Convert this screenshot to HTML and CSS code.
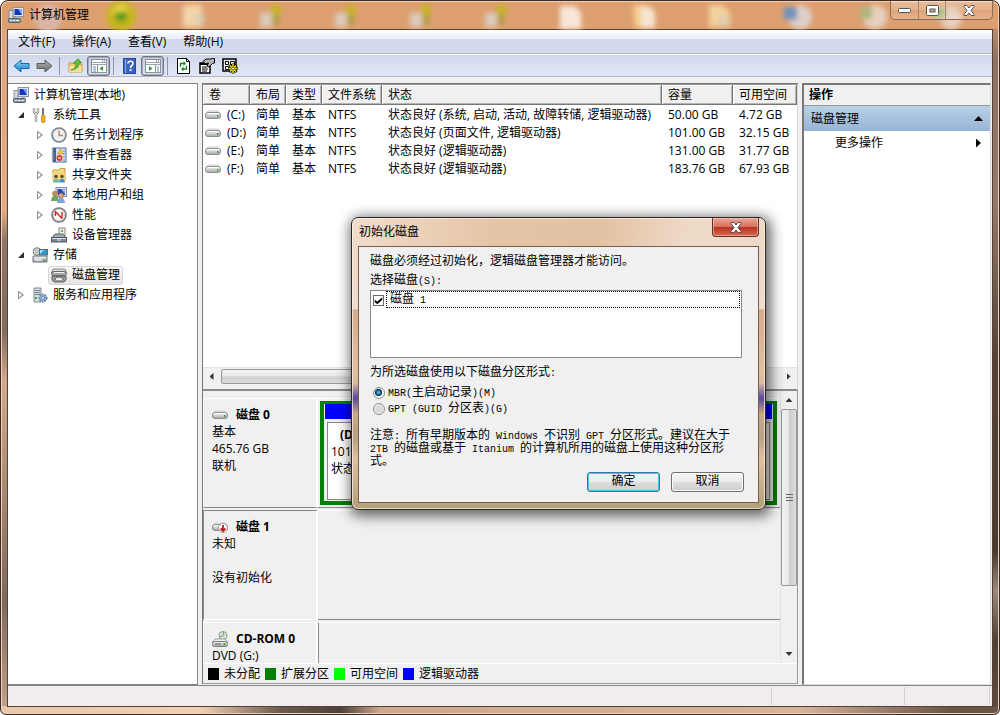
FILE: index.html
```html
<!DOCTYPE html>
<html lang="zh-CN">
<head>
<meta charset="utf-8">
<title>计算机管理</title>
<link rel="stylesheet" href="styles.css">
</head>
<body>
<svg class="defs" width="0" height="0" aria-hidden="true">
  <defs>
    <linearGradient id="metal" x1="0" y1="0" x2="0" y2="1"><stop offset="0" stop-color="#fafafa"/><stop offset="1" stop-color="#a4a6aa"/></linearGradient>
    <linearGradient id="blueArrow" x1="0" y1="0" x2="0" y2="1"><stop offset="0" stop-color="#8fdcfb"/><stop offset="1" stop-color="#1279c9"/></linearGradient>
    <linearGradient id="grayArrow" x1="0" y1="0" x2="0" y2="1"><stop offset="0" stop-color="#b5b5b5"/><stop offset="1" stop-color="#6a6a6a"/></linearGradient>
    <symbol id="drive" viewBox="0 0 16 16">
      <path d="M1 7 L3 4 H13 L15 7 Z" fill="#f4f4f4" stroke="#c0c0c0" stroke-width=".8"/>
      <rect x=".5" y="5.500" width="15" height="6" rx="2.500" fill="url(#metal)" stroke="#8b8d91"/>
      <path d="M2.500 6.500h11" stroke="#fff"/>
      <rect x="12" y="8" width="1.500" height="2" fill="#3f9a35"/>
    </symbol>
    <symbol id="computer" viewBox="0 0 16 16">
      <rect x="5" y=".5" width="10.500" height="9" fill="#dfe5ee" stroke="#8793a8"/>
      <rect x="6.500" y="2" width="7.500" height="6" fill="#1637b8"/>
      <path d="M10 2h4v6z" fill="#7da5f2"/>
      <rect x="1" y="3.500" width="4" height="8" fill="#d4d9df" stroke="#7d8691" stroke-width=".8"/>
      <path d="M8 9.500h4v2H8z" fill="#aab3c2"/>
      <rect x=".5" y="11.500" width="12" height="4" rx="1" fill="#8d99a4" stroke="#56616c"/>
      <path d="M2 13.500h2m1 0h2m1 0h3" stroke="#e7edf2"/>
    </symbol>
    <symbol id="panel" viewBox="0 0 16 14">
      <rect x=".5" y=".5" width="15" height="13" fill="#fff" stroke="#8b929c"/>
      <path d="M1 3.500h14M1 5.500h14" stroke="#9aa3ae"/>
      <path d="M11 2h1m1 0h1" stroke="#555"/>
    </symbol>
  </defs>
</svg>

<div class="window">
  <header class="titlebar">
    <svg class="glass" width="1000" height="29" aria-hidden="true">
      <g filter="url(#soft)">
        <circle cx="48" cy="17" r="14" fill="#d9b5a5"/>
        <circle cx="121" cy="15" r="15" fill="#c7b51c"/><circle cx="121" cy="15" r="6" fill="#5d9a22"/><path d="M108 12l14-9 8 7z" fill="#e8d747"/>
        <rect x="183" y="4" width="19" height="22" fill="#f2d4a8"/><circle cx="200" cy="18" r="5" fill="#d8cdb2"/>
        <g id="app"><rect x="260" y="12" width="12" height="14" fill="#dccaba"/><circle cx="276" cy="9" r="6" fill="#c8b22c"/><path d="M272 14h7v10h-5z" fill="#ad9c3a"/></g>
        <use href="#app" x="75"/><use href="#app" x="150"/><use href="#app" x="225"/>
        <path d="M560 5h15l6 7v16h-21z" fill="#f9e6d8"/>
        <path d="M633 4h14v22h-12z" fill="#f7cd8e"/><path d="M641 6h10l4 6v15h-14z" fill="#f6e4d0"/>
        <path d="M709 4h14l7 8v14h-21z" fill="#f3d19c"/><circle cx="724" cy="20" r="6" fill="#ddceb0"/>
        <circle cx="800" cy="16" r="12" fill="#dfcfca"/><rect x="784" y="6" width="13" height="13" fill="#7391bd"/>
        <circle cx="875" cy="16" r="12" fill="#e6cfbd"/><rect x="860" y="6" width="12" height="12" fill="#afb57c"/>
        <circle cx="951" cy="17" r="11" fill="#e8cfbd"/><rect x="934" y="6" width="12" height="12" fill="#a9bb7c"/>
      </g>
      <filter id="soft"><feGaussianBlur stdDeviation="2.500"/></filter>
    </svg>
    <svg class="icon" viewBox="0 0 16 16"><use href="#computer"/></svg>
    <h1 class="title">计算机管理</h1>
    <div class="caption">
      <button class="cap" aria-label="最小化"><svg width="13" height="7" viewBox="0 0 13 7"><rect x=".5" y="1.500" width="12" height="4" rx="1" fill="#fff" stroke="#55565c"/></svg></button>
      <button class="cap" aria-label="最大化"><svg width="13" height="11" viewBox="0 0 13 11"><rect x=".5" y=".5" width="12" height="10" rx="1" fill="#fff" stroke="#55565c"/><rect x="4" y="4" width="5" height="3" fill="#d9a57e" stroke="#55565c"/></svg></button>
      <button class="cap cap-close" aria-label="关闭"><svg width="12" height="11" viewBox="0 0 12 11"><path d="M1 .5h3l2 2.500 2-2.500h3v1L8 5.500l3 4v1H8L6 8l-2 2.500H1v-1l3-4-3-4z" fill="#fff" stroke="#55565c"/></svg></button>
    </div>
  </header>

  <div class="client">
    <nav class="menubar">
      <button class="menu">文件(F)</button>
      <button class="menu">操作(A)</button>
      <button class="menu">查看(V)</button>
      <button class="menu">帮助(H)</button>
    </nav>
    <div class="toolbar">
      <button class="tool" aria-label="后退"><svg width="17" height="14" viewBox="0 0 17 14"><path d="M1 7l7-6v3.500h8v5H8V13z" fill="url(#blueArrow)" stroke="#1b66a8"/></svg></button>
      <button class="tool" aria-label="前进"><svg width="17" height="14" viewBox="0 0 17 14"><path d="M16 7L9 1v3.500H1v5h8V13z" fill="url(#grayArrow)" stroke="#5d5d5d"/></svg></button>
      <i class="sep"></i>
      <button class="tool" aria-label="上一级"><svg width="15" height="15" viewBox="0 0 15 15"><path d="M1 5h5l1 1h7v8H1z" fill="#f0cf70" stroke="#c39a3c"/><path d="M1.500 8h12v6h-12z" fill="#f9e09a"/><path d="M3 12C7 11 8 8 8 5H5.500L10 .8 13.500 5H11c0 4-3 7-8 7z" fill="#63c436" stroke="#2f8a1c" stroke-width=".7"/></svg></button>
      <button class="tool pressed" aria-label="显示控制台树"><svg width="16" height="14" viewBox="0 0 16 14"><use href="#panel"/><path d="M6.500 6v7" stroke="#8b929c"/><path d="M2 8h3m-3 2h3m-3 2h3" stroke="#5e8fc0"/><path d="M12 7v5L8.500 9.500z" fill="#2ea12b"/></svg></button>
      <i class="sep"></i>
      <button class="tool" aria-label="帮助"><svg width="13" height="16" viewBox="0 0 13 16"><rect x=".5" y=".5" width="12" height="15" fill="#3c62c4" stroke="#28479a"/><path d="M2.500 1v14" stroke="#8ea8e8"/><path d="M5 5.500C5 2.500 10 2.500 10 5.500 10 7.500 7.500 7.500 7.500 10" fill="none" stroke="#fff" stroke-width="1.600"/><rect x="6.700" y="11.200" width="1.800" height="1.800" fill="#fff"/></svg></button>
      <button class="tool pressed" aria-label="显示操作窗格"><svg width="16" height="14" viewBox="0 0 16 14"><use href="#panel"/><path d="M10.500 6v7" stroke="#8b929c"/><path d="M12 8h2m-2 2h2m-2 2h2" stroke="#5e8fc0"/><path d="M4 7v5l3.500-2.500z" fill="#2ea12b"/></svg></button>
      <i class="sep"></i>
      <button class="tool" aria-label="刷新"><svg width="13" height="16" viewBox="0 0 13 16"><path d="M.5.5h9l3 3v12H.5z" fill="#fff" stroke="#000"/><path d="M9.500.5v3h3" fill="none" stroke="#000"/><path d="M3.500 9V5.500H7M9.500 7.500V11H6" fill="none" stroke="#168a22" stroke-width="1.300"/><path d="M6.500 3v5l2.500-2.500zM6.500 8.500v5L4 11z" fill="#168a22"/></svg></button>
      <button class="tool" aria-label="属性"><svg width="16" height="16" viewBox="0 0 16 16"><rect x="1" y="5" width="10" height="10" fill="#fff" stroke="#000" stroke-width="1.500"/><path d="M1 6h10" stroke="#000" stroke-width="2"/><path d="M3 9h5m-5 2h6m-6 2h5" stroke="#000"/><path d="M4 3.500l3-2.500h5l1.500-.5h2V5l-2 .5L10 9 8 8l1.500-3-3 1z" fill="#b5b5b5" stroke="#000"/></svg></button>
      <button class="tool" aria-label="设置"><svg width="16" height="16" viewBox="0 0 16 16"><rect x="1" y="1" width="13" height="12" fill="#e8e8e8" stroke="#000" stroke-width="1.500"/><path d="M3.500 3.500h3v3h-3zM3.500 8.500h3v3h-3z" fill="#fff" stroke="#000"/><path d="M8.500 3.500h4v3h-4z" fill="#fff" stroke="#000"/><path d="M11 5.500v10M6 10.500h10M7.500 7l7 7m0-7l-7 7" stroke="#000" stroke-width="2.600"/><path d="M11 6v9M6.500 10.500h9M8 7.500l6 6m0-6l-6 6" stroke="#f5e11c" stroke-width="1.500"/><circle cx="11" cy="10.500" r="1.400" fill="#fff" stroke="#000" stroke-width=".6"/></svg></button>
    </div>

    <main class="panes">
      <nav class="tree" aria-label="控制台树">
        <div class="node l0"><span class="label"><svg class="icon" viewBox="0 0 16 16"><use href="#computer"/></svg>计算机管理(本地)</span></div>
        <div class="node l1"><i class="arrow open"></i><span class="label"><svg class="icon" viewBox="0 0 16 16"><path d="M2 1v4l2 2 2-2V1M4 6.500V15" fill="none" stroke="#8c8c8c" stroke-width="2.400"/><path d="M2 1v4l2 2 2-2V1M4 6.500V15" fill="none" stroke="#e4e4e4"/><path d="M11 1v7" stroke="#777" stroke-width="2"/><rect x="9.500" y="8" width="3.500" height="7.500" rx="1.500" fill="#f3b41d" stroke="#b77d0b" stroke-width=".8"/></svg>系统工具</span></div>
        <div class="node l2"><i class="arrow"></i><span class="label"><svg class="icon" viewBox="0 0 16 16"><circle cx="8" cy="8" r="7" fill="#f7efd8" stroke="#77818e" stroke-width="1.600"/><circle cx="8" cy="8" r="5.500" fill="#eef3fa" stroke="#cfd6df" stroke-width=".6"/><path d="M8 3.500v5h4" fill="none" stroke="#c08a3c" stroke-width="1.400"/></svg>任务计划程序</span></div>
        <div class="node l2"><i class="arrow"></i><span class="label"><svg class="icon" viewBox="0 0 16 16"><rect x="2" y="1" width="13" height="14" fill="#d9e6f5" stroke="#4c6ba0"/><rect x="2" y="1" width="3" height="14" fill="#3f5f99"/><path d="M.5 3h3m-3 3h3m-3 3h3m-3 3h3" stroke="#999"/><path d="M12 4h2m-2 3h2m-2 3h2m-2 3h2" stroke="#6787bb"/><path d="M9.500 2l3 5h-6z" fill="#ffd52a" stroke="#b78500" stroke-width=".6"/><circle cx="8.500" cy="11" r="3" fill="#dc3a2c"/><path d="M7.500 10l2 2m0-2l-2 2" stroke="#fff"/></svg>事件查看器</span></div>
        <div class="node l2"><i class="arrow"></i><span class="label"><svg class="icon" viewBox="0 0 16 16"><path d="M2 3h6l1-1.500h5V13H2z" fill="#f6dc84" stroke="#c49d3d"/><path d="M2 5.500h12v7.500H2z" fill="#f3d27a"/><circle cx="5" cy="9.500" r="1.700" fill="#584327"/><path d="M2 15.500c0-5 6-5 6 0z" fill="#6cb6a2"/><circle cx="11" cy="9.500" r="1.700" fill="#6d4b28"/><path d="M8 15.500c0-5 6-5 6 0z" fill="#4690cf"/></svg>共享文件夹</span></div>
        <div class="node l2"><i class="arrow"></i><span class="label"><svg class="icon" viewBox="0 0 16 16"><rect x="5" y=".5" width="10.500" height="9" fill="#dbe3ee" stroke="#8390a5"/><rect x="6.500" y="2" width="7.500" height="6" fill="#2148bd"/><path d="M10 2h4v5z" fill="#8fb0f0"/><circle cx="4" cy="6.500" r="2.800" fill="#b98a5c"/><path d="M0 14c0-7 8-7 8 0z" fill="#6fa45c"/><circle cx="10" cy="8.500" r="2.500" fill="#d9a978" stroke="#82583a" stroke-width=".7"/><path d="M6 16c0-7 8-7 8 0z" fill="#7fa6da"/></svg>本地用户和组</span></div>
        <div class="node l2"><i class="arrow"></i><span class="label"><svg class="icon" viewBox="0 0 16 16"><circle cx="8" cy="8" r="7" fill="#fff" stroke="#777" stroke-width="1.600"/><circle cx="8" cy="8" r="5.500" fill="none" stroke="#c9c9c9"/><path d="M4.500 4v5M4.500 4.500l6.500 7M11 5v6.500" fill="none" stroke="#d12424" stroke-width="1.400"/></svg>性能</span></div>
        <div class="node l2"><i class="arrow none"></i><span class="label"><svg class="icon" viewBox="0 0 16 16"><rect x="8" y="1" width="6" height="8" fill="#f2f2ec" stroke="#8a8a80"/><path d="M10 3h2v2h-2z" fill="#6d9a52"/><path d="M2 9l2-2h8l2 2v2H2z" fill="#a4adb6" stroke="#5e6973"/><rect x=".5" y="10.500" width="15" height="4.500" fill="#7b8791" stroke="#4e5962"/><path d="M1 11.500h14" stroke="#dde3e8"/><path d="M6 13h4" stroke="#eee"/></svg>设备管理器</span></div>
        <div class="node l1"><i class="arrow open"></i><span class="label"><svg class="icon" viewBox="0 0 16 16"><circle cx="5" cy="4.500" r="3.800" fill="#cdd8d0" stroke="#71807a"/><circle cx="5" cy="4.500" r="1.200" fill="#fff" stroke="#777" stroke-width=".6"/><rect x="7.500" y="2.500" width="8" height="5.500" fill="#2d9bd0" stroke="#5a6a75"/><path d="M8 3h4l-4 4z" fill="#a8e2f5"/><path d="M1 9h14v6H1z" fill="url(#metal)" stroke="#6b6f74"/><path d="M3 13h6" stroke="#fff"/><rect x="11.500" y="12" width="2" height="2" fill="#3c9e35"/></svg>存储</span></div>
        <div class="node l2"><i class="arrow none"></i><span class="label selected"><svg class="icon" viewBox="0 0 16 16"><path d="M2 2h12l1.500 4H.5z" fill="#d8d8d8" stroke="#888"/><rect x=".5" y="4.500" width="15" height="4" rx="2" fill="#a6a6a6" stroke="#666"/><path d="M3 5.500h10" stroke="#f2f2f2"/><path d="M1 9h14v4l-2 2H3L1 13z" fill="#9a9a9a" stroke="#606060"/><path d="M4 13c0-4 8-4 8 0" fill="#eee" stroke="#555"/></svg>磁盘管理</span></div>
        <div class="node l1"><i class="arrow"></i><span class="label"><svg class="icon" viewBox="0 0 16 16"><path d="M2 1h7v14H2z" fill="#d5dce2" stroke="#7a8894"/><path d="M3 3.500h5M3 5.500h5M3 7.500h5" stroke="#72818d"/><rect x="3" y="10" width="2" height="2" fill="#46a34b"/><circle cx="11" cy="11" r="3.600" fill="#9fb9d3" stroke="#5b81a8" stroke-width="1.800" stroke-dasharray="1.600 1"/><circle cx="11" cy="11" r="1.500" fill="#fff" stroke="#5b81a8"/></svg>服务和应用程序</span></div>
      </nav>

      <section class="center">
        <div class="volumes">
          <table class="vol-table">
            <colgroup><col class="c-vol"><col class="c-layout"><col class="c-type"><col class="c-fs"><col><col class="c-cap"><col class="c-free"></colgroup>
            <thead><tr><th>卷</th><th>布局</th><th>类型</th><th>文件系统</th><th>状态</th><th>容量</th><th>可用空间</th></tr></thead>
            <tbody>
              <tr><td class="vol"><svg class="icon" viewBox="0 0 16 16"><use href="#drive"/></svg>(C:)</td><td>简单</td><td>基本</td><td>NTFS</td><td>状态良好 (系统, 启动, 活动, 故障转储, 逻辑驱动器)</td><td>50.00 GB</td><td>4.72 GB</td></tr>
              <tr><td class="vol"><svg class="icon" viewBox="0 0 16 16"><use href="#drive"/></svg>(D:)</td><td>简单</td><td>基本</td><td>NTFS</td><td>状态良好 (页面文件, 逻辑驱动器)</td><td>101.00 GB</td><td>32.15 GB</td></tr>
              <tr><td class="vol"><svg class="icon" viewBox="0 0 16 16"><use href="#drive"/></svg>(E:)</td><td>简单</td><td>基本</td><td>NTFS</td><td>状态良好 (逻辑驱动器)</td><td>131.00 GB</td><td>31.77 GB</td></tr>
              <tr><td class="vol"><svg class="icon" viewBox="0 0 16 16"><use href="#drive"/></svg>(F:)</td><td>简单</td><td>基本</td><td>NTFS</td><td>状态良好 (逻辑驱动器)</td><td>183.76 GB</td><td>67.93 GB</td></tr>
            </tbody>
          </table>
          <div class="hscroll">
            <button class="sbtn" aria-label="向左滚动"><i class="tri left"></i></button>
            <div class="hthumb"></div>
            <button class="sbtn" aria-label="向右滚动"><i class="tri right"></i></button>
          </div>
        </div>

        <div class="disks">
          <div class="disk-area">
            <div class="disk-list">
              <div class="disk">
                <div class="disk-label raised">
                  <div class="disk-name"><svg class="icon" viewBox="0 0 16 16"><use href="#drive"/></svg>磁盘 0</div>
                  <div>基本</div><div>465.76 GB</div><div>联机</div>
                </div>
                <div class="disk-body">
                  <div class="extended">
                    <div class="stripe"></div>
                    <div class="volume"><b>(D:)</b><span>101.00 GB NTFS</span><span>状态良好</span></div>
                  </div>
                </div>
              </div>
              <div class="disk">
                <div class="disk-label sunken">
                  <div class="disk-name"><svg class="icon" viewBox="0 0 16 16"><use href="#drive"/><circle cx="11" cy="9" r="4.500" fill="#fff" stroke="#999"/><path d="M11 6v6M8.500 9.500L11 12l2.500-2.500" fill="none" stroke="#c4151c" stroke-width="1.800"/></svg>磁盘 1</div>
                  <div>未知</div><div>&nbsp;</div><div>没有初始化</div>
                </div>
                <div class="disk-body"></div>
              </div>
              <div class="disk last">
                <div class="disk-label raised">
                  <div class="disk-name"><svg class="icon" viewBox="0 0 16 16"><circle cx="11" cy="4.500" r="4" fill="#dbe8dc" stroke="#8d9a90"/><path d="M11 .5l1 3.500M7.500 6l3-1.500" stroke="#67a868"/><circle cx="11" cy="4.500" r="1" fill="#fff" stroke="#777" stroke-width=".6"/><path d="M3 8h10l2.500 3H.5z" fill="#f1f1f1" stroke="#a1a1a1"/><rect x=".5" y="10.500" width="15" height="5" rx="2" fill="url(#metal)" stroke="#77797d"/><path d="M3 13h6" stroke="#555"/><rect x="11.500" y="12" width="2" height="2" fill="#3c9e35"/></svg>CD-ROM 0</div>
                  <div>DVD (G:)</div>
                </div>
                <div class="disk-body line-left"></div>
              </div>
            </div>
            <div class="vscroll">
              <button class="sbtn" aria-label="向上滚动"><i class="tri up"></i></button>
              <div class="vthumb"><i class="grip"></i></div>
              <button class="sbtn" aria-label="向下滚动"><i class="tri down"></i></button>
            </div>
          </div>
          <div class="legend">
            <span class="key"><i class="swatch unalloc"></i>未分配</span>
            <span class="key"><i class="swatch ext"></i>扩展分区</span>
            <span class="key"><i class="swatch free"></i>可用空间</span>
            <span class="key"><i class="swatch logical"></i>逻辑驱动器</span>
          </div>
        </div>
      </section>

      <aside class="actions">
        <h2 class="actions-head">操作</h2>
        <button class="action-group">磁盘管理<i class="tri up big"></i></button>
        <button class="action-item">更多操作<i class="tri right big"></i></button>
      </aside>
    </main>

    <footer class="statusbar"><span class="cell grow"></span><span class="cell mid"></span><span class="cell end"></span></footer>
  </div>

  <div class="dialog" role="dialog" aria-labelledby="dlg-title">
    <div class="dialog-title">
      <h2 id="dlg-title">初始化磁盘</h2>
      <button class="dialog-close" aria-label="关闭"><svg width="12" height="11" viewBox="0 0 12 11"><path d="M1 .5h3l2 2.500 2-2.500h3v1L8 5.500l3 4v1H8L6 8l-2 2.500H1v-1l3-4-3-4z" fill="#fff" stroke="#5b4a5c"/></svg></button>
    </div>
    <form class="dialog-body">
      <p>磁盘必须经过初始化，逻辑磁盘管理器才能访问。</p>
      <p>选择磁盘<span class="en">(S):</span></p>
      <div class="listbox">
        <input class="check" type="checkbox" id="d1" checked>
        <label class="list-item" for="d1">磁盘<span class="en"> 1</span></label>
      </div>
      <p class="style-head">为所选磁盘使用以下磁盘分区形式<span class="en">:</span></p>
      <div class="option"><input class="radio" type="radio" name="style" id="mbr" checked><label for="mbr"><span class="en">MBR(</span>主启动记录<span class="en">)(M)</span></label></div>
      <div class="option"><input class="radio" type="radio" name="style" id="gpt"><label for="gpt"><span class="en">GPT (GUID </span>分区表<span class="en">)(G)</span></label></div>
      <p class="note">注意<span class="en">: </span>所有早期版本的<span class="en"> Windows </span>不识别<span class="en"> GPT </span>分区形式。建议在大于<br><span class="en">2TB </span>的磁盘或基于<span class="en"> Itanium </span>的计算机所用的磁盘上使用这种分区形<br>式。</p>
      <div class="buttons">
        <button type="button" class="btn default">确定</button>
        <button type="button" class="btn">取消</button>
      </div>
    </form>
  </div>
</div>
</body>
</html>
```
FILE: styles.css
```css
* { box-sizing: border-box; }

body {
  margin: 0;
  background: #fff;
  color: #000;
  font: 12px/18px "Open Sans", "Noto Sans CJK SC", sans-serif;
}

button, input { font: inherit; color: inherit; margin: 0; }
button { border: 0; padding: 0; background: none; }
h1, h2, p { margin: 0; font: inherit; }
.defs { position: absolute; }
.icon { width: 16px; height: 16px; flex: none; }
svg { display: block; }

/* window frame */
.window {
  position: relative;
  display: flex;
  flex-direction: column;
  height: 100vh;
  padding: 0 6px 7px;
  border: 1px solid #3e2a20;
  border-radius: 8px 8px 6px 6px;
  overflow: hidden;
  box-shadow: inset 0 0 0 1px #f0d2bc;
  background:
    linear-gradient(#dd9f70, #dd9f70) 0 0 / 100% 28px no-repeat,
    linear-gradient(90deg, #e8c8ac 0, #f0d0b4 20%, #6a5c50 28%, #4c423a 34%, #cba88e 38%, #d6b49c 80%, #6a5648 95%) 0 100% / 100% 8px no-repeat,
    linear-gradient(#dfa57b 0, #e2ab83 210px, #8d7766 240px, #7f6c5e 330px, #d3aa8c 380px, #7c6a5c 600px, #c5a58e) 0 0 / 8px 100% no-repeat,
    linear-gradient(#dfa57b 0, #8a7262 60px, #937b6b 200px, #54453b 350px, #463a33 550px, #988a80 590px, #4d4038 640px, #5c4c42) 100% 0 / 8px 100% no-repeat;
}

.titlebar {
  position: relative;
  display: flex;
  align-items: center;
  flex: 0 0 28px;
  gap: 5px;
  padding-left: 1px;
}
.glass { position: absolute; left: -7px; top: 0; z-index: 0; }
.titlebar > .icon, .title, .caption { position: relative; }
.title { flex: 1; }
.caption {
  display: flex;
  align-self: flex-start;
  height: 19px;
  border: 1px solid #8b6a58;
  border-top: 0;
  border-radius: 0 0 5px 5px;
  overflow: hidden;
}
.cap {
  display: grid;
  place-items: center;
  width: 27px;
  background: linear-gradient(rgba(255, 255, 255, .3), rgba(255, 255, 255, .18) 50%, rgba(255, 255, 255, .05) 50%, rgba(255, 255, 255, .2));
}
.cap + .cap { border-left: 1px solid #a98470; }
.cap-close { width: 47px; }

.client {
  display: flex;
  flex-direction: column;
  flex: 1;
  min-height: 0;
  border: 1px solid #5a4032;
  background: #f0f0f0;
}

/* menu and toolbar */
.menubar {
  display: flex;
  flex: 0 0 24px;
  align-items: center;
  gap: 17px;
  padding-left: 10px;
  border-bottom: 1px solid #b2b6c6;
  background: linear-gradient(#fff, #e6ebf6 9px, #d3daed 9px, #d3daed);
}
.toolbar {
  display: flex;
  flex: 0 0 23px;
  align-items: center;
  gap: 6px;
  padding-left: 5px;
  border-top: 1px solid #fff;
  border-bottom: 1px solid #b2b6c6;
  background: linear-gradient(#cfd8ea, #e0e7f7);
}
.tool { display: grid; place-items: center; min-width: 17px; height: 20px; }
.tool.pressed {
  width: 23px;
  margin: 0 -3px;
  border: 1px solid #6c7587;
  border-radius: 3px;
  background: linear-gradient(#c6ccd9, #dfe4ee);
  box-shadow: inset 0 0 0 1px #a4acbd;
}
.sep { width: 1px; height: 18px; margin-right: 1px; background: #8d95a5; }

/* three panes */
.panes {
  display: grid;
  flex: 1;
  grid-template-columns: 190px minmax(0, 1fr) 189px;
  grid-template-rows: minmax(0, 1fr);
  gap: 4px;
  min-height: 0;
  padding: 6px 1px 0 0;
}

.tree {
  padding-top: 1px;
  border: 1px solid #858585;
  border-left: 0;
  background: #fff;
}
.node { display: flex; align-items: center; gap: 2px; height: 20px; }
.node.l0 { padding-left: 2px; }
.node.l1 { padding-left: 7px; }
.node.l2 { padding-left: 26px; }
.label {
  display: flex;
  align-items: center;
  gap: 5px;
  height: 19px;
  padding: 0 2px;
  border: 1px solid transparent;
}
.label.selected {
  border-color: #d6d6d6;
  border-radius: 3px;
  background: linear-gradient(#f9f9f9, #e5e5e5);
}
.arrow { display: grid; place-items: center; width: 12px; height: 12px; }
.arrow::before {
  content: "";
  width: 6px;
  height: 9px;
  background: #8e8e8e;
  clip-path: polygon(0 0, 100% 50%, 0 100%, 0 0, 1px 2px, 1px 7px, 4px 50%, 1px 2px);
}
.arrow.open::before {
  width: 6px;
  height: 6px;
  background: #303030;
  clip-path: polygon(100% 0, 100% 100%, 0 100%);
}
.arrow.none::before { content: none; }

.center {
  display: grid;
  grid-template-rows: 307px minmax(0, 1fr);
  margin-bottom: 1px;
  border-top: 1px solid #777;
  border-left: 1px solid #777;
}

/* volume list */
.volumes {
  display: flex;
  flex-direction: column;
  justify-content: space-between;
  border-top: 1px solid #999;
  border-right: 1px solid #d8d8d8;
  border-bottom: 2px solid #8b8b8b;
  background: #fff;
  min-height: 0;
}
.vol-table {
  width: 100%;
  table-layout: fixed;
  border-collapse: separate;
  border-spacing: 0;
}
.c-vol { width: 47px; }
.c-layout, .c-type { width: 36px; }
.c-fs { width: 60px; }
.c-cap { width: 71px; }
.c-free { width: 64px; }
.vol-table th {
  height: 20px;
  padding: 1px 6px 0;
  border-right: 1px solid #777;
  border-bottom: 1px solid #777;
  background: #f0f0f0;
  box-shadow: inset 1px 1px 0 #fff, inset -1px -1px 0 #b5b5b5;
  font-weight: 400;
  text-align: left;
  white-space: nowrap;
}
.vol-table td { height: 18px; padding: 0 0 0 6px; white-space: nowrap; }
.vol-table td.vol { display: flex; align-items: center; gap: 6px; padding-left: 2px; }
.vol-table tbody::before { content: ""; display: block; height: 1px; }

.hscroll {
  display: flex;
  height: 22px;
  padding-bottom: 4px;
  border-top: 1px solid #e3e3e3;
  background: #f0f0f0;
}
.sbtn { display: grid; place-items: center; flex: 0 0 17px; }
.hthumb {
  flex: 0 0 430px;
  margin: 1px 0 1px 1px;
  border: 1px solid #989898;
  border-radius: 2px;
  background: linear-gradient(#f5f5f5, #e6e6e6 48%, #d0d0d0 52%, #dcdcdc);
}
.hscroll .sbtn:last-child { margin-left: auto; }

.tri { width: 7px; height: 4px; background: #333; }
.tri.up { clip-path: polygon(50% 0, 100% 100%, 0 100%); }
.tri.down { clip-path: polygon(0 0, 100% 0, 50% 100%); }
.tri.left { width: 4px; height: 7px; clip-path: polygon(100% 0, 100% 100%, 0 50%); }
.tri.right { width: 4px; height: 7px; clip-path: polygon(0 0, 100% 50%, 0 100%); }
.tri.big { width: 9px; height: 5px; background: #000; }
.tri.right.big { width: 5px; height: 9px; margin-right: 2px; }

/* disk map */
.disks {
  display: flex;
  flex-direction: column;
  min-height: 0;
  border-right: 1px solid #999;
  border-bottom: 1px solid #999;
}
.disk-area { display: flex; flex: 1; min-height: 0; }
.disk-list {
  display: flex;
  flex: 1;
  flex-direction: column;
  gap: 2px;
  padding-top: 7px;
  min-width: 0;
  overflow: hidden;
}
.disk { display: flex; flex: 0 0 110px; min-height: 0; }
.disk.last { flex: 1 1 0; overflow: hidden; }
.disk-label {
  flex: 0 0 115px;
  padding: 7px 0 0 8px;
  border: 1px solid #fff;
  line-height: 17px;
}
.disk-label.raised { border-right: 2px solid #fff; border-bottom: 1px solid #888; }
.disk-label.sunken { border-color: #888 #fff #fff #888; border-right-width: 2px; }
.disk.last .disk-label { border-bottom: 0; }
.disk-name { display: flex; align-items: center; gap: 8px; font-weight: 700; }
.disk-body {
  flex: 1;
  min-width: 0;
  padding: 2px 3px 2px 2px;
  border-top: 1px solid #fff;
  border-bottom: 1px solid #888;
}
.disk-body.line-left { border-left: 1px solid #888; border-bottom: 0; }
.extended {
  display: flex;
  flex-direction: column;
  gap: 3px;
  height: 100%;
  padding: 0 1px 1px;
  border: 4px solid #008000;
  border-top-width: 3px;
  background: #f0f0f0;
}
.stripe { flex: 0 0 15px; background: #00f; }
.volume {
  display: flex;
  flex: 1;
  flex-direction: column;
  min-height: 0;
  margin: 0 2px;
  padding: 3px 3px;
  border: 1px solid #888;
  background: #fff;
  line-height: 17px;
}
.volume b { padding-left: 9px; }

.vscroll { display: flex; flex: 0 0 17px; flex-direction: column; border-left: 1px solid #e3e3e3; }
.vscroll .sbtn { flex-basis: 18px; }
.vthumb {
  display: grid;
  place-items: center;
  flex: 0 0 177px;
  border: 1px solid #989898;
  border-radius: 2px;
  background: linear-gradient(90deg, #f5f5f5, #e6e6e6 48%, #cdcdd2 52%, #dcdcdc);
}
.vscroll .sbtn:last-child { margin-top: auto; }
.grip { width: 7px; height: 8px; background: repeating-linear-gradient(#666 0, #666 1px, transparent 1px, transparent 3px); }

.legend {
  display: flex;
  align-items: center;
  flex: 0 0 20px;
  gap: 5px;
  padding-left: 5px;
  border-top: 1px solid #fff;
}
.key { display: flex; align-items: center; gap: 5px; }
.swatch { width: 11px; height: 12px; }
.unalloc { background: #000; }
.ext { background: #008000; }
.free { background: #0f0; }
.logical { background: #00f; }

/* actions */
.actions {
  display: flex;
  flex-direction: column;
  border: 1px solid #dcdcdc;
  border-top: 2px solid #777;
  border-left: 2px solid #777;
  background: #fff;
}
.actions-head {
  height: 21px;
  padding: 1px 0 0 5px;
  border-bottom: 1px solid #999;
  background: #f0f0f0;
  font-weight: 700;
}
.action-group, .action-item {
  display: flex;
  align-items: center;
  justify-content: space-between;
  height: 25px;
  padding: 0 7px;
}
.action-group { background: linear-gradient(#b9d1e8, #98b4d4); }
.action-item { height: 24px; padding-left: 31px; }

.statusbar {
  display: flex;
  flex: 0 0 21px;
  padding: 1px 2px 1px 0;
  border-top: 1px solid #858585;
  background: #f0edec;
}
.cell { border-right: 1px solid #d2cfce; }
.grow { flex: 1; }
.mid { width: 133px; }
.end { width: 85px; }

/* dialog window */
.dialog {
  position: absolute;
  left: 350px;
  top: 216px;
  width: 415px;
  padding: 0 6px 6px;
  border: 1px solid #2d2420;
  border-radius: 7px;
  background:
    linear-gradient(100deg, #f1dccb 0, #e5c4a6 35%, #e3c2a3 60%, #eed8c6 80%) 0 0 / 100% 30px no-repeat,
    linear-gradient(#ecd5c3, #f0dccd 91px, #d4ac8c 92px, #e0bf9f 150px, #d9bb9c 165px, #5a48a0 180px, #c8a98c 196px, #b7a184 220px, #dfc0a0 240px, #b2a27c 290px);
  box-shadow: inset 0 0 0 1px rgba(255, 245, 235, .7), 2px 3px 13px 3px rgba(0, 0, 0, .6);
}
.dialog-title { display: flex; height: 28px; }
.dialog-title h2 { flex: 1; padding: 5px 0 0 1px; }
.dialog-close {
  display: grid;
  place-items: center;
  width: 47px;
  height: 19px;
  border: 1px solid #65302a;
  border-top: 0;
  border-radius: 0 0 4px 4px;
  background: linear-gradient(#e8a597, #d8705c 48%, #b93420 52%, #d9674d);
  box-shadow: inset 0 0 0 1px rgba(255, 220, 205, .5);
}
.dialog-body {
  padding: 5px 16px 10px 11px;
  border: 1px solid #7a5c4c;
  background: #f0f0f0;
  font-family: "Liberation Mono", "Noto Sans CJK SC", monospace;
}
.dialog-body p { padding-top: 1px; line-height: 18px; white-space: nowrap; }
.en { font: 10px/12px "Liberation Mono", monospace; white-space: pre; }
.listbox {
  display: flex;
  align-items: flex-start;
  gap: 2px;
  height: 68px;
  padding: 0 1px 1px 2px;
  border: 1px solid #828790;
  background: #fff;
}
.check {
  display: grid;
  place-items: center;
  appearance: none;
  width: 11px;
  height: 11px;
  margin-top: 4px;
  border: 1px solid #6b6b6b;
  background: #fff;
}
.check:checked::before {
  content: "";
  width: 9px;
  height: 8px;
  background: #000;
  clip-path: polygon(8% 40%, 36% 62%, 92% 8%, 92% 42%, 38% 98%, 8% 72%);
}
.list-item {
  flex: 1;
  height: 17px;
  padding-left: 3px;
  border: 1px dotted #000;
  line-height: 17px;
}
.dialog-body .style-head { margin: 5px 0 3px; }
.option { display: flex; align-items: center; gap: 3px; height: 16px; padding-left: 3px; }
.radio {
  appearance: none;
  width: 12px;
  height: 12px;
  border: 1px solid #8e8f8f;
  border-radius: 50%;
  background: radial-gradient(circle, #d8d8d8 30%, #f4f4f4);
}
.radio:checked { background: radial-gradient(circle at 45% 45%, #7fc8ec 0, #165a8a 30%, #103c5e 42%, #f4f4f4 52%); }
.dialog-body .note { margin-top: 12px; line-height: 12px; }
.buttons { display: flex; justify-content: flex-end; gap: 11px; margin: 4px -2px 0 0; }
.btn {
  width: 73px;
  height: 20px;
  border: 1px solid #707070;
  border-radius: 3px;
  background: linear-gradient(#f3f3f3, #ebebeb 50%, #dddddd 50%, #cfcfcf);
  box-shadow: inset 0 0 0 1px #fbfbfb;
  line-height: 18px;
}
.btn.default { border-color: #2d7c9c; box-shadow: inset 0 0 0 1px #48c4ec; }
```
